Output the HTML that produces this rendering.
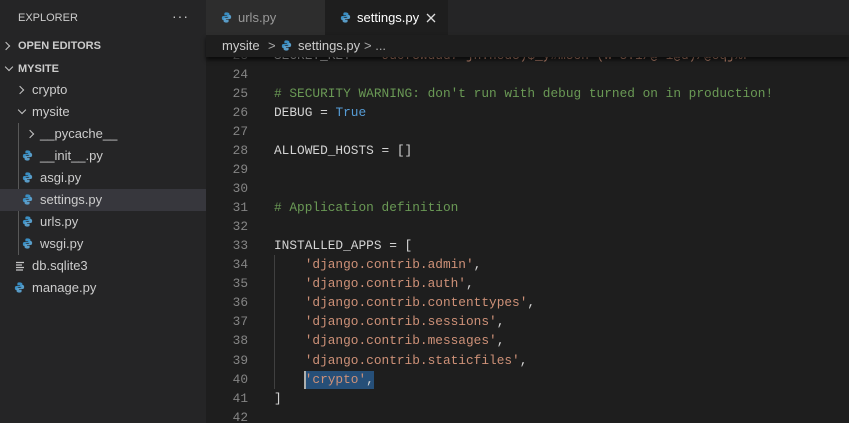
<!DOCTYPE html>
<html><head><meta charset="utf-8"><style>
*{margin:0;padding:0;box-sizing:border-box}
body{width:849px;height:423px;overflow:hidden;background:#1e1e1e;font-family:"Liberation Sans",sans-serif;position:relative}
#side{position:absolute;left:0;top:0;width:206px;height:423px;background:#252526;color:#ccc;font-size:13px}
.row{position:absolute;left:0;width:206px;height:22px;line-height:22px;white-space:nowrap}
.chev{position:absolute;width:6px;height:6px;border-right:1.3px solid #c5c5c5;border-bottom:1.3px solid #c5c5c5}
.r{transform:rotate(-45deg)}
.d{transform:rotate(45deg)}
.py{position:absolute;width:11px;height:11px}
#tabs{position:absolute;left:206px;top:0;width:643px;height:35px;background:#252526}
.tab{position:absolute;top:0;height:35px;line-height:35px;font-size:13px}
#bc{position:absolute;left:206px;top:35px;width:643px;height:22px;line-height:22px;background:#1e1e1e;color:#ccc;font-size:13px;box-shadow:0 3px 4px #000a;z-index:2}
#code{position:absolute;left:206px;top:57px;width:643px;height:366px;overflow:hidden;font-family:"Liberation Mono",monospace;font-size:12.8px}
#inner{position:absolute;top:-11.5px;left:0;width:643px}
.ln{height:19.07px;line-height:19.07px;white-space:pre;position:relative}
.n{position:absolute;right:601px;color:#858585;width:40px;text-align:right}
.t{position:absolute;left:68px;color:#d4d4d4}
.c{color:#6a9955}.k{color:#569cd6}.s{color:#ce9178}
.g{position:absolute;left:68px;top:0;width:1px;height:19.07px;background:#404040}
</style></head><body>
<svg width="0" height="0" style="position:absolute"><defs><g id="pyi"><path d="M5.5 0.5C3 0.5 3 1.5 3 2.5V4H6V4.7H1.8C0.5 4.7 0 5.8 0 7.2C0 8.7 0.7 9.5 1.8 9.5H3V7.8C3 6.7 3.9 6 5 6H7.5C8.3 6 9 5.4 9 4.5V2.5C9 1.3 7.7 0.5 5.5 0.5Z" fill="#3b8ec2"/><path d="M5.5 12.5C8 12.5 8 11.5 8 10.5V9H5V8.3H9.2C10.5 8.3 11 7.2 11 5.8C11 4.3 10.3 3.5 9.2 3.5H8V5.2C8 6.3 7.1 7 6 7H3.5C2.7 7 2 7.6 2 8.5V10.5C2 11.7 3.3 12.5 5.5 12.5Z" fill="#5ea9d8" opacity=".9"/></g></defs></svg>
<div id="side">
<div class="row" style="top:7px;left:18px;font-size:11px">EXPLORER</div>
<div class="row" style="top:5px;left:172px;font-size:14px;letter-spacing:1px">···</div>
<div class="row" style="top:35px"><span class="chev r" style="left:3px;top:8px"></span><b style="position:absolute;left:18px;font-size:11px">OPEN EDITORS</b></div>
<div class="row" style="top:58px"><span class="chev d" style="left:6px;top:6px"></span><b style="position:absolute;left:18px;font-size:11px">MYSITE</b></div>
<div class="row" style="top:79px"><span class="chev r" style="left:17px;top:8px"></span><span style="position:absolute;left:32px">crypto</span></div>
<div class="row" style="top:101px"><span class="chev d" style="left:19px;top:6px"></span><span style="position:absolute;left:32px">mysite</span></div>
<div style="position:absolute;left:18px;top:123px;width:1px;height:132px;background:#585858"></div>
<div class="row" style="top:123px"><span class="chev r" style="left:27px;top:8px"></span><span style="position:absolute;left:40px">__pycache__</span></div>
<div class="row" style="top:145px"><svg class="py" style="left:22px;top:5px" viewBox="0 0 11 13"><use href="#pyi"/></svg><span style="position:absolute;left:40px">__init__.py</span></div>
<div class="row" style="top:167px"><svg class="py" style="left:22px;top:5px" viewBox="0 0 11 13"><use href="#pyi"/></svg><span style="position:absolute;left:40px">asgi.py</span></div>
<div class="row" style="top:189px;background:#37373d"><svg class="py" style="left:22px;top:5px" viewBox="0 0 11 13"><use href="#pyi"/></svg><span style="position:absolute;left:40px">settings.py</span></div>
<div class="row" style="top:211px"><svg class="py" style="left:22px;top:5px" viewBox="0 0 11 13"><use href="#pyi"/></svg><span style="position:absolute;left:40px">urls.py</span></div>
<div class="row" style="top:233px"><svg class="py" style="left:22px;top:5px" viewBox="0 0 11 13"><use href="#pyi"/></svg><span style="position:absolute;left:40px">wsgi.py</span></div>
<div class="row" style="top:255px"><svg style="position:absolute;left:16px;top:6px" width="10" height="10"><path d="M0 1.5H8M0 4H6M0 6.5H8M0 9H7" stroke="#c5c5c5" stroke-width="1.3"/></svg><span style="position:absolute;left:32px">db.sqlite3</span></div>
<div class="row" style="top:277px"><svg class="py" style="left:14px;top:5px" viewBox="0 0 11 13"><use href="#pyi"/></svg><span style="position:absolute;left:32px">manage.py</span></div>
</div>
<div id="tabs">
<div class="tab" style="left:0;width:119px;background:#2d2d2d;color:#999"><svg class="py" style="left:15px;top:12px;position:absolute" viewBox="0 0 11 13"><use href="#pyi"/></svg><span style="position:absolute;left:32px">urls.py</span></div>
<div class="tab" style="left:119px;width:123px;background:#1e1e1e;color:#fff"><svg class="py" style="left:15px;top:12px;position:absolute" viewBox="0 0 11 13"><use href="#pyi"/></svg><span style="position:absolute;left:32px">settings.py</span><svg style="position:absolute;left:101px;top:13px" width="10" height="10"><path d="M1 1L9 9M9 1L1 9" stroke="#ddd" stroke-width="1.3"/></svg></div>
</div>
<div id="bc"><span style="position:absolute;left:16px">mysite</span><span style="position:absolute;left:62px;color:#aaa">&gt;</span><svg class="py" style="left:75px;top:5px;position:absolute" viewBox="0 0 11 13"><use href="#pyi"/></svg><span style="position:absolute;left:92px">settings.py</span><span style="position:absolute;left:158px;color:#aaa">&gt; ...</span></div>
<div id="code"><div id="inner">
<div class="ln"><span class="n">23</span><span class="t">SECRET_KEY = <span class="s">'9u0f5wdud7 jn.hod5)$_y#m5ch (w=5.1/@ 1@d)/@oqj%r'</span></span></div>
<div class="ln"><span class="n">24</span></div>
<div class="ln"><span class="n">25</span><span class="t c"># SECURITY WARNING: don't run with debug turned on in production!</span></div>
<div class="ln"><span class="n">26</span><span class="t">DEBUG = <span class="k">True</span></span></div>
<div class="ln"><span class="n">27</span></div>
<div class="ln"><span class="n">28</span><span class="t">ALLOWED_HOSTS = []</span></div>
<div class="ln"><span class="n">29</span></div>
<div class="ln"><span class="n">30</span></div>
<div class="ln"><span class="n">31</span><span class="t c"># Application definition</span></div>
<div class="ln"><span class="n">32</span></div>
<div class="ln"><span class="n">33</span><span class="t">INSTALLED_APPS = [</span></div>
<div class="ln"><span class="g"></span><span class="n">34</span><span class="t">    <span class="s">'django.contrib.admin'</span>,</span></div>
<div class="ln"><span class="g"></span><span class="n">35</span><span class="t">    <span class="s">'django.contrib.auth'</span>,</span></div>
<div class="ln"><span class="g"></span><span class="n">36</span><span class="t">    <span class="s">'django.contrib.contenttypes'</span>,</span></div>
<div class="ln"><span class="g"></span><span class="n">37</span><span class="t">    <span class="s">'django.contrib.sessions'</span>,</span></div>
<div class="ln"><span class="g"></span><span class="n">38</span><span class="t">    <span class="s">'django.contrib.messages'</span>,</span></div>
<div class="ln"><span class="g"></span><span class="n">39</span><span class="t">    <span class="s">'django.contrib.staticfiles'</span>,</span></div>
<div class="ln"><span class="g"></span><span class="n">40</span><span style="position:absolute;left:98px;top:1px;width:70px;height:18px;background:#264f78"></span><span style="position:absolute;left:98px;top:1px;width:2px;height:18px;background:#aeafad"></span><span class="t">    <span class="s">'crypto'</span>,</span></div>
<div class="ln"><span class="n">41</span><span class="t">]</span></div>
<div class="ln"><span class="n">42</span></div>
</div></div>
</body></html>
